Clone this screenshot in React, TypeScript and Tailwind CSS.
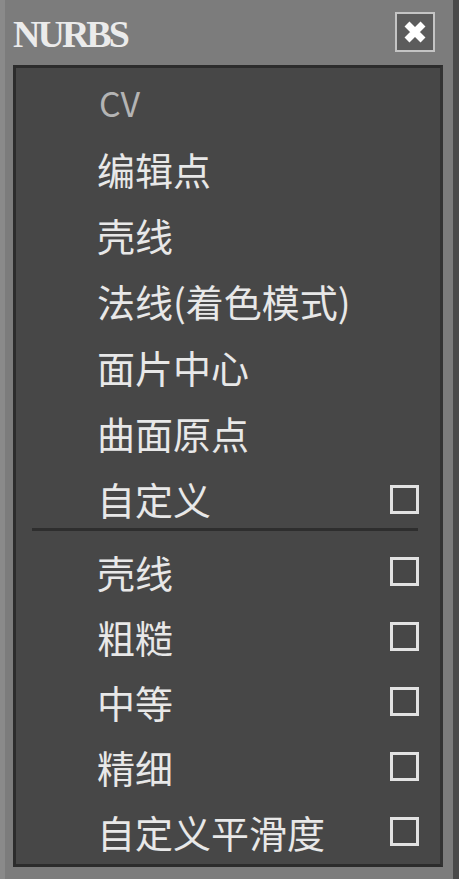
const topItems = [
  { label: "CV", dim: true },
  { label: "编辑点" },
  { label: "壳线" },
  { label: "法线(着色模式)" },
  { label: "面片中心" },
  { label: "曲面原点" },
  { label: "自定义", box: true },
];

const bottomItems = ["壳线", "粗糙", "中等", "精细", "自定义平滑度"];

const cjk = "font-['Noto_Sans_CJK_SC','Noto_Sans',sans-serif]";

function Box() {
  return <span className="block w-[29px] h-[29px] border-[3px] border-[#e2e2e2]" />;
}

function Row({ label, dim, box, tall }: { label: string; dim?: boolean; box?: boolean; tall?: boolean }) {
  return (
    <div className={`flex items-center justify-between pl-[81px] pr-[21px] ${tall ? "h-[66px]" : "h-[65px]"}`}>
      <span
        className={`leading-none ${dim ? "text-[34px] text-[#b4b4b4] pl-[2px]" : "text-[38px] text-[#e8e8e8]"}`}
      >
        {label}
      </span>
      {box && <Box />}
    </div>
  );
}

export default function App() {
  return (
    <div className={`w-[459px] h-[879px] bg-[#7c7c7c] flex ${cjk}`}>
      <div className="w-[453px] flex flex-col border-l-[5px] border-[#8a8a8a] pl-[8px] pr-[10px] pb-[14px]">
        <div className="h-[65px] flex items-center justify-between shrink-0">
          <span className="font-['Liberation_Serif',serif] font-bold text-[38px] tracking-[-3px] text-[#ebebeb] leading-none mt-[2px]">
            NURBS
          </span>
          <button className="w-[40px] h-[40px] border-2 border-[#c4c4c4] bg-[#5c5c5c] flex items-center justify-center mr-[8px] mb-[1px]">
            <svg width="22" height="22" viewBox="0 0 22 22">
              <path d="M3 3 L19 19 M19 3 L3 19" stroke="#ffffff" strokeWidth="7" />
            </svg>
          </button>
        </div>
        <div className="flex-1 bg-[#474747] border-[3px] border-[#2c2c2c] border-r-[#333333] pt-[2px]">
          {topItems.map((it) => (
            <Row key={it.label} label={it.label} dim={it.dim} box={it.box} tall />
          ))}
          <div className="ml-[16px] mr-[22px] h-[3px] bg-[#2e2e2e] mt-[-4px] mb-[8px]" />
          {bottomItems.map((l) => (
            <Row key={l} label={l} box />
          ))}
        </div>
      </div>
      <div className="flex-1 bg-[#4a4a4a]" />
    </div>
  );
}
